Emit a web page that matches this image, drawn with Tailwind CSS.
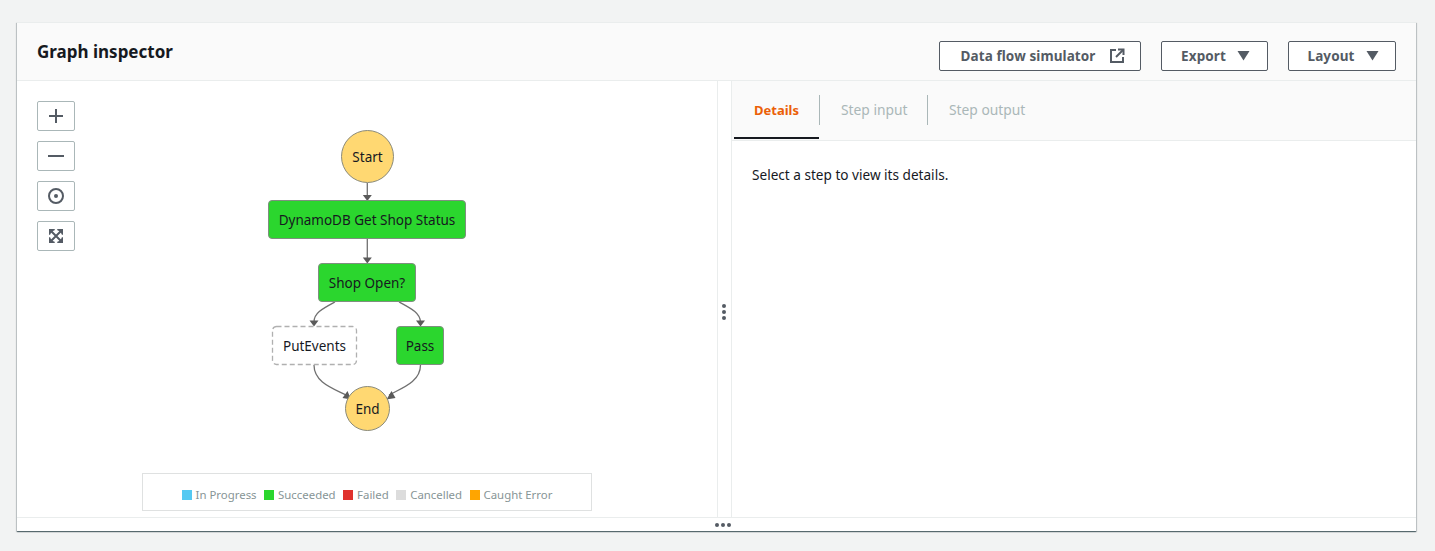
<!DOCTYPE html>
<html lang="en">
  <head>
    <meta charset="UTF-8" />
    <title>Graph inspector</title>
    <script src="https://cdn.jsdelivr.net/npm/@tailwindcss/browser@4"></script>
  </head>
  <body class="h-[551px] overflow-hidden bg-[#f2f3f3] font-['Noto_Sans',sans-serif] text-[#16191f]">
    <div class="pl-[17px] pr-[19px] pt-[22px]">
      <div class="flex h-[509px] flex-col bg-white shadow-[0_1px_1px_0_rgba(0,28,36,0.5),1px_1px_1px_0_rgba(0,28,36,0.15),-1px_1px_1px_0_rgba(0,28,36,0.15)]">
        <!-- Header -->
        <div class="flex h-[59px] items-start justify-between border-y border-[#eaeded] bg-[#fafafa] pl-5 pr-5">
          <h2 class="mt-[16px] text-[17px] leading-[25px] font-bold">Graph inspector</h2>
          <div class="mt-[18px] flex gap-5 text-[13.5px] font-bold tracking-[0.1px] text-[#545b64]">
            <button class="flex h-[30px] w-[202px] items-center justify-center gap-[13px] rounded-[2px] border border-[#545b64] bg-white pl-[5px]">
              Data flow simulator
              <svg class="h-4 w-4" viewBox="0 0 16 16" fill="none" stroke="#545b64" stroke-width="2"><path d="M7 2H2v12h12V9" /><path d="M9 1.500h5.500V7" /><path d="M14 2 7 9" /></svg>
            </button>
            <button class="flex h-[30px] w-[107px] items-center justify-center gap-[11px] rounded-[2px] border border-[#545b64] bg-white pl-[2px]">
              Export
              <svg class="h-[10px] w-[13px]" viewBox="0 0 13 10" fill="#545b64"><path d="M0.500 0h12L6.500 9.500z" /></svg>
            </button>
            <button class="flex h-[30px] w-[108px] items-center justify-center gap-[11px] rounded-[2px] border border-[#545b64] bg-white pl-[2px]">
              Layout
              <svg class="h-[10px] w-[13px]" viewBox="0 0 13 10" fill="#545b64"><path d="M0.500 0h12L6.500 9.500z" /></svg>
            </button>
          </div>
        </div>

        <!-- Panes -->
        <div class="flex min-h-0 flex-1">
          <!-- Graph -->
          <div class="relative w-[700px]">
            <div class="absolute left-5 top-5 flex flex-col gap-[10px]">
              <button class="flex h-[30px] w-[38px] items-center justify-center rounded-[2px] border border-[#aab7b8] bg-white">
                <svg class="h-4 w-4" viewBox="0 0 16 16" stroke="#545b64" stroke-width="2"><path d="M8 1v14M1 8h14" /></svg>
              </button>
              <button class="flex h-[30px] w-[38px] items-center justify-center rounded-[2px] border border-[#aab7b8] bg-white">
                <svg class="h-4 w-4" viewBox="0 0 16 16" stroke="#545b64" stroke-width="2"><path d="M0 8h16" /></svg>
              </button>
              <button class="flex h-[30px] w-[38px] items-center justify-center rounded-[2px] border border-[#aab7b8] bg-white">
                <svg class="h-4 w-4" viewBox="0 0 16 16"><circle cx="8" cy="8" r="7" fill="none" stroke="#545b64" stroke-width="2" /><circle cx="8" cy="8" r="2" fill="#545b64" /></svg>
              </button>
              <button class="flex h-[30px] w-[38px] items-center justify-center rounded-[2px] border border-[#aab7b8] bg-white">
                <svg class="h-[14px] w-[14px]" viewBox="0 0 14 14"><path d="M0 0h6L0 6zM14 0v6L8 0zM14 14H8l6-6zM0 14V8l6 6z" fill="#545b64" /><path d="M.7 8.500v4.800h4.800M8.500 13.300h4.800V8.500M13.300 5.500V.7H8.500M5.500 .7H.7v4.800" fill="none" stroke="#545b64" stroke-width="1.400" /><path d="M2 2l10 10M12 2 2 12" stroke="#545b64" stroke-width="2" /></svg>
              </button>
            </div>

            <!-- Edges, in page coordinates -->
            <svg class="absolute inset-0 h-full w-full" viewBox="17 81 700 436" fill="none">
              <g stroke="#707070" stroke-width="1.300">
                <path d="M367.300 183V196" />
                <path d="M367.300 238.700V259" />
                <path d="M335 302C322 309 314 313 314 322" />
                <path d="M399 302C412 309 420 313 420.500 322" />
                <path d="M314 365C314 382 332 388 346 395" />
                <path d="M420.500 365C420.500 382 402 388 389 395" />
              </g>
              <g fill="#5a5a5a">
                <path d="M362.800 195h9l-4.500 6z" />
                <path d="M362.800 257.500h9l-4.500 6z" />
                <path d="M309.500 320.500h9l-4.500 6z" />
                <path d="M416 320.500h9l-4.500 6z" />
                <path d="M342.500 398l5-7 3.500 8.500z" />
                <path d="M391.500 391l4 7-9 1.500z" />
              </g>
              <rect x="272.500" y="326.500" width="84" height="38" rx="4" fill="#fff" stroke="#b0b0b0" stroke-width="1.300" stroke-dasharray="5 3" />
            </svg>

            <!-- Nodes -->
            <div class="text-[13.5px] leading-none">
              <div class="absolute left-[324px] top-[49px] flex h-[53px] w-[53px] items-center justify-center rounded-full border border-[#8a8a7a] bg-[#ffd872] pt-[2px]">Start</div>
              <div class="absolute left-[251px] top-[119px] flex h-[39px] w-[198px] items-center justify-center rounded-[4px] border border-[#7f8f7f] bg-[#2bd62e] pt-[2px]">DynamoDB Get Shop Status</div>
              <div class="absolute left-[301px] top-[182px] flex h-[39px] w-[98px] items-center justify-center rounded-[4px] border border-[#7f8f7f] bg-[#2bd62e] pt-[2px]">Shop Open?</div>
              <div class="absolute left-[255px] top-[245px] flex h-[39px] w-[85px] items-center justify-center pt-[2px]">PutEvents</div>
              <div class="absolute left-[379px] top-[245px] flex h-[39px] w-[48px] items-center justify-center rounded-[4px] border border-[#7f8f7f] bg-[#2bd62e] pt-[2px]">Pass</div>
              <div class="absolute left-[328px] top-[305px] flex h-[45px] w-[45px] items-center justify-center rounded-full border border-[#8a8a7a] bg-[#ffd872] pt-[2px]">End</div>
            </div>

            <!-- Legend -->
            <div class="absolute bottom-[6px] left-[125px] flex h-[38px] w-[450px] items-center justify-center border border-[#dfe1e1] bg-white pt-[5px] text-[11.4px] text-[#879596]">
              <span class="mr-1 h-[10px] w-[10px] bg-[#55c9f2]"></span><span class="mr-[7.500px]">In Progress</span>
              <span class="mr-1 h-[10px] w-[10px] bg-[#2bd62e]"></span><span class="mr-[7.500px]">Succeeded</span>
              <span class="mr-1 h-[10px] w-[10px] bg-[#e0322d]"></span><span class="mr-[7.500px]">Failed</span>
              <span class="mr-1 h-[10px] w-[10px] bg-[#dcdcdc]"></span><span class="mr-[7.500px]">Cancelled</span>
              <span class="mr-1 h-[10px] w-[10px] bg-[#ffa500]"></span><span>Caught Error</span>
            </div>
          </div>

          <!-- Vertical resize handle -->
          <div class="flex w-[15px] flex-col items-center justify-center gap-[2px] border-x border-[#eaeded] bg-white pr-[1px] pt-[26px]">
            <span class="h-1 w-1 rounded-full bg-[#545b64]"></span>
            <span class="h-1 w-1 rounded-full bg-[#545b64]"></span>
            <span class="h-1 w-1 rounded-full bg-[#545b64]"></span>
          </div>

          <!-- Details -->
          <div class="flex-1">
            <div class="flex h-[60px] border-b border-[#eaeded] bg-[#fafafa] pl-[2px] pt-[14px] text-[13.8px] leading-[30px]">
              <div class="h-[44px] w-[85px] border-b-2 border-[#16191f] text-center text-[13px] font-bold text-[#eb5f07]">Details</div>
              <div class="h-[30px] w-[108px] border-l border-[#aab7b8] pl-[21px] text-[#aab7b8]">Step input</div>
              <div class="h-[30px] border-l border-[#aab7b8] pl-[21px] text-[#aab7b8]">Step output</div>
            </div>
            <p class="pl-5 pt-[24px] text-[13.6px] leading-[20px]">Select a step to view its details.</p>
          </div>
        </div>

        <!-- Horizontal resize handle -->
        <div class="flex h-[14px] shrink-0 items-center justify-center gap-[2px] border-t border-[#eaeded] pl-[13px]">
          <span class="h-1 w-1 rounded-full bg-[#545b64]"></span>
          <span class="h-1 w-1 rounded-full bg-[#545b64]"></span>
          <span class="h-1 w-1 rounded-full bg-[#545b64]"></span>
        </div>
      </div>
    </div>
  </body>
</html>
